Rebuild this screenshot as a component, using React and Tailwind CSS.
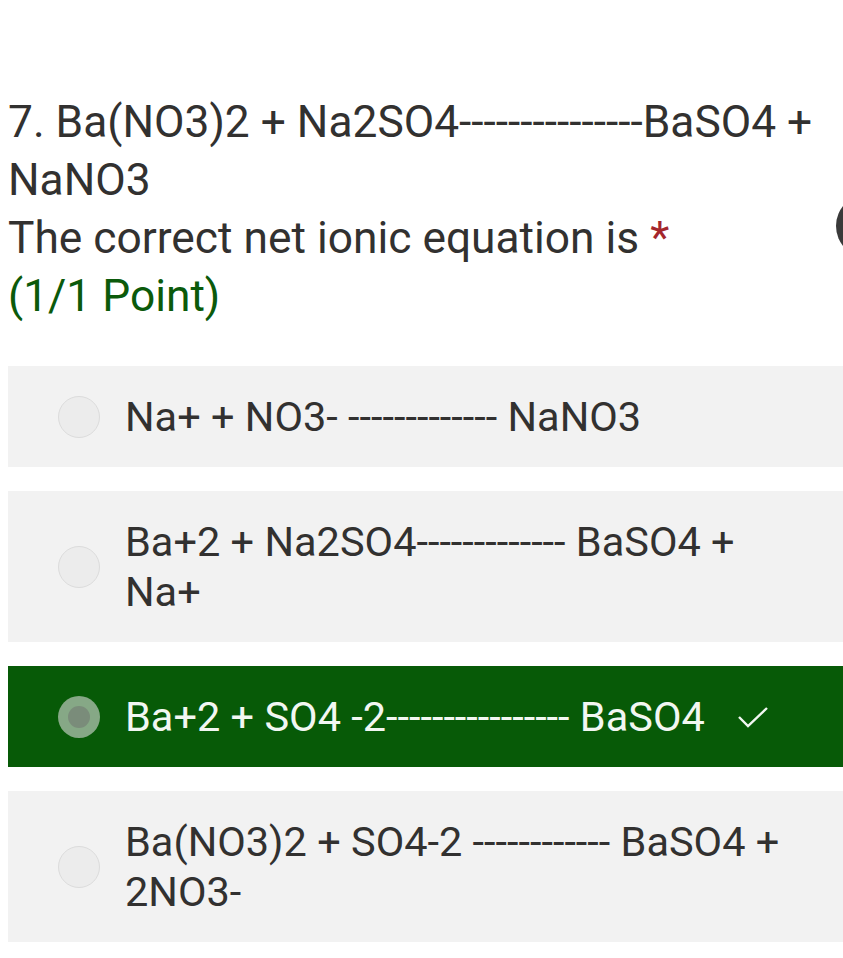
import React from "react";

const options = [
  { text: "Na+ + NO3- ------------- NaNO3" },
  { text: "Ba+2 + Na2SO4------------- BaSO4 + Na+" },
  { text: "Ba+2 + SO4 -2---------------- BaSO4", correct: true },
  { text: "Ba(NO3)2 + SO4-2 ------------ BaSO4 + 2NO3-" },
];

function Radio({ selected }) {
  if (selected) {
    return (
      <div className="w-[42px] h-[42px] shrink-0 rounded-full bg-[#86a886] flex items-center justify-center">
        <div className="w-[22px] h-[22px] rounded-full bg-[#7a8c7a]" />
      </div>
    );
  }
  return (
    <div className="w-[42px] h-[42px] shrink-0 rounded-full bg-[#ececec] border border-[#dcdcdc]" />
  );
}

export default function App() {
  return (
    <div
      className="relative w-[843px] h-[958px] overflow-hidden bg-white"
      style={{ fontFamily: "Roboto, 'Liberation Sans', sans-serif" }}
    >
      {/* cut-off round button on right edge */}
      <div className="absolute left-[836px] top-[194px] w-[64px] h-[64px] rounded-full bg-[#3a3a3a]" />

      <div className="pt-[93px] pl-[8px] pr-[20px] text-[44.3px] leading-[58px] text-[#323130]">
        <div>
          7. Ba(NO3)2 + Na2SO4---------------BaSO4 + NaNO3
        </div>
        <div>
          The correct net ionic equation is{" "}
          <span className="text-[#a4262c]">*</span>
        </div>
        <div className="text-[#0b5a0b]">(1/1 Point)</div>
      </div>

      <div className="mt-[41px] pl-[8px] flex flex-col gap-[24px]">
        {options.map((opt, i) => (
          <div
            key={i}
            className={
              opt.correct
                ? "flex items-center gap-[25px] pl-[50px] pr-[40px] py-[25.5px] bg-[#075a07] text-[#f2f7f2]"
                : "flex items-center gap-[25px] pl-[50px] pr-[40px] py-[25.5px] bg-[#f2f2f2] text-[#323130]"
            }
          >
            <Radio selected={opt.correct} />
            <div className="text-[41.5px] leading-[50px] flex items-center">
              <span>{opt.text}</span>
              {opt.correct && (
                <svg
                  className="ml-[32px] shrink-0"
                  width="32"
                  height="24"
                  viewBox="0 0 32 24"
                  fill="none"
                  stroke="#f2f7f2"
                  strokeWidth="2.4"
                >
                  <polyline points="2,12 11,21 30,3" />
                </svg>
              )}
            </div>
          </div>
        ))}
      </div>
    </div>
  );
}
